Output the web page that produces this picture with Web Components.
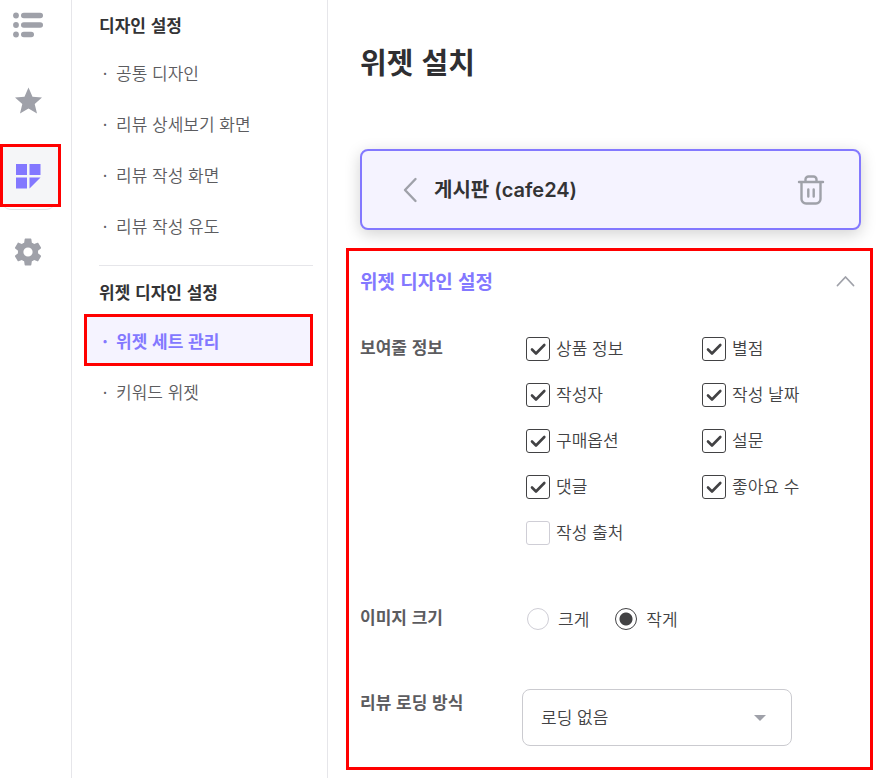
<!DOCTYPE html>
<html lang="ko">
<head>
<meta charset="utf-8">
<title>위젯 설치</title>
<style>
    body {
        margin: 0;
        background: #fff;
        color: #424244;
        font-family: "Noto Sans CJK KR", sans-serif;
        font-size: 17px;
        --accent: #8378ff;
        --tint: #f5f3ff;
        --mark: #ff0000;
        --line: #e6e6ea;
        --gray: #9fa1a9;
    }
</style>
</head>
<body>

<admin-layout>
    <icon-rail slot="rail">
        <rail-item label="목록">
            <svg width="32" height="28" viewBox="0 0 32 28" fill="currentColor">
                <circle cx="4" cy="5.500" r="2.900"/><rect x="9" y="2.700" width="22" height="5.600" rx="2.800"/>
                <circle cx="4" cy="15" r="2.900"/><rect x="9" y="12.200" width="22" height="5.600" rx="2.800"/>
                <circle cx="4" cy="24.500" r="2.900"/><rect x="9" y="21.700" width="13" height="5.600" rx="2.800"/>
            </svg>
        </rail-item>
        <rail-item label="즐겨찾기">
            <svg width="28" height="28" viewBox="0 0 28 28" fill="currentColor">
                <path d="M14.500 1.500l4 9.200 9.500.700-7.300 6.500L23 27.500l-8.500-5.100L6 27.500l2.300-9.600L1 11.400l9.500-.700z"/>
            </svg>
        </rail-item>
        <rail-item label="위젯" active>
            <svg width="28" height="28" viewBox="0 0 28 28" fill="currentColor">
                <path d="M2 2h11v11H2zM15.500 2h11v11h-11zM2 15.500h11v11H2zM15.500 15.500h11l-11 11z"/>
            </svg>
        </rail-item>
        <rail-item label="설정">
            <svg width="28" height="28" viewBox="2 2 20 20" fill="currentColor">
                <path d="M19.140 12.940c.040-.300.060-.610.060-.940 0-.320-.020-.640-.070-.940l2.030-1.580c.180-.140.230-.410.120-.610l-1.920-3.320c-.120-.220-.370-.290-.590-.220l-2.390.960c-.500-.380-1.030-.700-1.620-.940l-.360-2.540c-.040-.240-.240-.410-.480-.410h-3.840c-.240 0-.430.170-.470.410l-.360 2.540c-.590.240-1.130.570-1.620.940l-2.390-.960c-.220-.080-.470 0-.590.220L2.740 8.870c-.120.210-.080.470.120.610l2.030 1.580c-.050.300-.090.630-.090.940s.020.640.070.940l-2.030 1.580c-.180.140-.230.410-.120.610l1.920 3.320c.120.220.370.290.590.220l2.390-.960c.500.380 1.030.700 1.620.940l.360 2.540c.050.240.240.410.480.410h3.840c.240 0 .440-.170.470-.410l.360-2.540c.590-.240 1.130-.560 1.620-.940l2.390.960c.220.080.470 0 .590-.220l1.920-3.320c.120-.220.070-.470-.120-.610zM12 15.300a3.300 3.300 0 1 1 0-6.600 3.300 3.300 0 0 1 0 6.600z"/>
            </svg>
        </rail-item>
    </icon-rail>

    <side-menu slot="menu">
        <menu-group heading="디자인 설정">
            <menu-item>공통 디자인</menu-item>
            <menu-item>리뷰 상세보기 화면</menu-item>
            <menu-item>리뷰 작성 화면</menu-item>
            <menu-item>리뷰 작성 유도</menu-item>
        </menu-group>
        <menu-group heading="위젯 디자인 설정">
            <menu-item active>위젯 세트 관리</menu-item>
            <menu-item>키워드 위젯</menu-item>
        </menu-group>
    </side-menu>

    <page-title>위젯 설치</page-title>
    <widget-card>게시판 (cafe24)</widget-card>
    <settings-panel heading="위젯 디자인 설정">
        <check-field label="보여줄 정보">
            <check-option checked>상품 정보</check-option>
            <check-option checked>별점</check-option>
            <check-option checked>작성자</check-option>
            <check-option checked>작성 날짜</check-option>
            <check-option checked>구매옵션</check-option>
            <check-option checked>설문</check-option>
            <check-option checked>댓글</check-option>
            <check-option checked>좋아요 수</check-option>
            <check-option>작성 출처</check-option>
        </check-field>
        <radio-field label="이미지 크기" options="크게,작게" value="작게"></radio-field>
        <select-field label="리뷰 로딩 방식" options="로딩 없음"></select-field>
    </settings-panel>
</admin-layout>

<script>
// Small base: every element renders its own markup into an open shadow root.
class BaseElement extends HTMLElement {
    constructor() {
        super();
        this.attachShadow({ mode: 'open' });
    }

    connectedCallback() {
        const template = document.createElement('template');
        template.innerHTML = this.render();
        this.shadowRoot.replaceChildren(template.content.cloneNode(true));
    }

    attr(name) {
        return this.getAttribute(name) || '';
    }
}

class AdminLayout extends BaseElement {
    render() {
        return `
            <style>
                :host {
                    display: grid;
                    grid-template-columns: 72px 256px minmax(0, 1fr);
                    min-height: 100vh;
                }
                main { padding: 0 10px 8px 18px; }
            </style>
            <slot name="rail"></slot>
            <slot name="menu"></slot>
            <main><slot></slot></main>
        `;
    }
}

class IconRail extends BaseElement {
    render() {
        return `
            <style>
                :host { display: block; border-right: 1px solid var(--line); }
                nav {
                    display: flex;
                    flex-direction: column;
                    gap: 48px;
                    padding-top: 10px;
                }
            </style>
            <nav><slot></slot></nav>
        `;
    }
}

class RailItem extends BaseElement {
    render() {
        return `
            <style>
                :host { display: block; position: relative; width: 61px; height: 28px; color: var(--gray); }
                a {
                    display: flex;
                    align-items: center;
                    justify-content: center;
                    box-sizing: border-box;
                    height: 28px;
                    padding-right: 5px;
                    color: inherit;
                }
                :host([active]) { color: var(--accent); }
                :host([active]) a {
                    height: 63px;
                    margin-top: -18px;
                    border: 3px solid var(--mark);
                    background: #f5f6f8;
                }
                /* rounded lower edge of the active tile */
                :host([active])::after {
                    content: "";
                    position: absolute;
                    left: 0;
                    right: 4px;
                    bottom: -20px;
                    height: 12px;
                    border-bottom: 1px solid #e3e5e8;
                    border-radius: 0 0 12px 12px;
                    z-index: -1;
                }
            </style>
            <a href="#" aria-label="${this.attr('label')}"><slot></slot></a>
        `;
    }
}

class SideMenu extends BaseElement {
    render() {
        return `
            <style>
                :host { display: block; border-right: 1px solid var(--line); }
                nav { padding: 0 14px 0 12px; }
            </style>
            <nav><slot></slot></nav>
        `;
    }
}

class MenuGroup extends BaseElement {
    render() {
        return `
            <style>
                :host { display: block; }
                :host(:not(:first-child)) h2 {
                    margin-top: 14px;
                    padding-top: 14px;
                    border-top: 1px solid var(--line);
                }
                h2 {
                    margin: 0 0 0 15px;
                    font-size: 17px;
                    line-height: 24px;
                    padding: 13px 0 10px;
                    color: #333335;
                }
            </style>
            <h2>${this.attr('heading')}</h2>
            <slot></slot>
        `;
    }
}

class MenuItem extends BaseElement {
    render() {
        return `
            <style>
                :host { display: block; color: #5c5c5f; font-weight: 350; }
                a {
                    display: flex;
                    align-items: center;
                    box-sizing: border-box;
                    height: 51px;
                    padding-left: 15px;
                    border: 0 solid var(--mark);
                    color: inherit;
                    text-decoration: none;
                }
                .dot { width: 12px; margin-right: 5px; text-align: center; }
                :host([active]) { color: var(--accent); font-weight: bold; }
                :host([active]) a {
                    height: 52px;
                    border-width: 3px;
                    padding-left: 12px;
                    background: var(--tint);
                }
            </style>
            <a href="#"><span class="dot">·</span><slot></slot></a>
        `;
    }
}

class PageTitle extends BaseElement {
    render() {
        return `
            <style>
                :host { display: block; margin-left: 14px; }
                h1 {
                    margin: 0;
                    padding: 39px 0 66px;
                    font-size: 29px;
                    line-height: 44px;
                    color: #2f2f32;
                }
            </style>
            <h1><slot></slot></h1>
        `;
    }
}

class WidgetCard extends BaseElement {
    render() {
        return `
            <style>
                :host {
                    display: flex;
                    align-items: center;
                    box-sizing: border-box;
                    height: 81px;
                    margin: 0 12px 18px 14px;
                    padding: 0 34px 0 39px;
                    border: 2px solid var(--accent);
                    border-radius: 8px;
                    background: var(--tint);
                    box-shadow: 0 4px 16px rgba(0, 0, 0, .18);
                }
                button {
                    display: flex;
                    padding: 0;
                    border: 0;
                    background: none;
                    color: var(--gray);
                }
                h2 {
                    flex: 1;
                    margin: 0 0 0 16px;
                    font: bold 20px/28px Inter, "Noto Sans CJK KR", sans-serif;
                    font-weight: 600;
                    color: #333335;
                }
            </style>
            <button aria-label="뒤로">
                <svg width="17" height="26" viewBox="0 0 17 26" fill="none" stroke="currentColor" stroke-width="2.400" stroke-linecap="round" stroke-linejoin="round">
                    <path d="M14.500 2L4 13l10.500 11"/>
                </svg>
            </button>
            <h2><slot></slot></h2>
            <button aria-label="삭제">
                <svg width="28" height="32" viewBox="0 0 28 32" fill="none" stroke="currentColor" stroke-width="2.400" stroke-linecap="round" stroke-linejoin="round">
                    <path d="M2 8h24M8.500 8V5.500a3 3 0 0 1 3-3h5a3 3 0 0 1 3 3V8M4.500 8v17a4.500 4.500 0 0 0 4.500 4.500h10a4.500 4.500 0 0 0 4.500-4.500V8M11.300 15.500v7M16.700 15.500v7"/>
                </svg>
            </button>
        `;
    }
}

class SettingsPanel extends BaseElement {
    render() {
        return `
            <style>
                :host {
                    display: block;
                    padding: 0 11px 21px;
                    border: 3px solid var(--mark);
                }
                header {
                    display: flex;
                    align-items: center;
                    justify-content: space-between;
                    height: 60px;
                    padding-right: 4px;
                    margin-bottom: 26px;
                }
                h2 { margin: 0; font-size: 19px; line-height: 28px; color: var(--accent); }
                button { display: flex; padding: 0; border: 0; background: none; color: var(--gray); }
                .fields { display: flex; flex-direction: column; gap: 58px; }
            </style>
            <header>
                <h2>${this.attr('heading')}</h2>
                <button aria-label="접기" aria-expanded="true">
                    <svg width="20" height="14" viewBox="0 0 20 14" fill="none" stroke="currentColor" stroke-width="1.800" stroke-linecap="round" stroke-linejoin="round">
                        <path d="M2.500 11.500L10.500 3l8 8.500"/>
                    </svg>
                </button>
            </header>
            <div class="fields"><slot></slot></div>
        `;
    }
}

// Label on the left, control on the right
class FieldRow extends BaseElement {
    render() {
        return `
            <style>
                :host {
                    display: grid;
                    grid-template-columns: 162px minmax(0, 1fr);
                    align-items: start;
                }
                ::slotted([slot="label"]) {
                    font-weight: bold;
                    line-height: 20px;
                    color: #5c5c5f;
                }
            </style>
            <slot name="label"></slot>
            <slot></slot>
        `;
    }
}

class CheckField extends BaseElement {
    render() {
        return `
            <style>
                :host { display: block; }
                .options {
                    display: grid;
                    grid-template-columns: repeat(2, 176px);
                    gap: 22px 0;
                    padding-left: 4px;
                }
            </style>
            <field-row role="group" aria-labelledby="name">
                <span slot="label" id="name">${this.attr('label')}</span>
                <div class="options"><slot></slot></div>
            </field-row>
        `;
    }
}

class CheckOption extends BaseElement {
    render() {
        return `
            <style>
                :host { display: block; font-weight: 350; }
                label { display: flex; align-items: flex-start; gap: 6px; line-height: 22px; }
                .box { display: grid; }
                .box > * { grid-area: 1 / 1; }
                input {
                    appearance: none;
                    box-sizing: border-box;
                    width: 24px;
                    height: 24px;
                    margin: 0;
                    border: 1px solid #cfced6;
                    border-radius: 3px;
                    background: #fff;
                }
                input:checked { border-color: #424244; }
                svg { pointer-events: none; visibility: hidden; }
                input:checked + svg { visibility: visible; }
            </style>
            <label>
                <span class="box">
                    <input type="checkbox" ${this.hasAttribute('checked') ? 'checked' : ''}>
                    <svg width="24" height="24" viewBox="0 0 24 24" fill="none" stroke="#424244" stroke-width="2.600" stroke-linecap="round" stroke-linejoin="round">
                        <path d="M6 12.500l4 4L18.300 8"/>
                    </svg>
                </span>
                <span><slot></slot></span>
            </label>
        `;
    }
}

class RadioField extends BaseElement {
    render() {
        const options = this.attr('options').split(',').map(name => `
            <label>
                <input type="radio" name="size" value="${name}" ${name === this.attr('value') ? 'checked' : ''}>
                <span>${name}</span>
            </label>
        `).join('');
        return `
            <style>
                :host { display: block; padding-top: 4px; }
                .options { display: flex; gap: 26px; padding-left: 5px; font-weight: 350; }
                label { display: flex; align-items: center; gap: 9px; line-height: 24px; }
                input {
                    appearance: none;
                    box-sizing: border-box;
                    width: 22px;
                    height: 22px;
                    margin: 0;
                    border: 1px solid #cfced6;
                    border-radius: 50%;
                    background: #fff;
                }
                input:checked {
                    border-color: #424244;
                    background: radial-gradient(circle, #424244 6px, #fff 7px);
                }
            </style>
            <field-row role="radiogroup" aria-labelledby="name">
                <span slot="label" id="name">${this.attr('label')}</span>
                <div class="options">${options}</div>
            </field-row>
        `;
    }
}

class SelectField extends BaseElement {
    render() {
        const options = this.attr('options').split(',').map(name => `<option>${name}</option>`).join('');
        return `
            <style>
                :host { display: block; }
                label { padding-top: 3px; }
                .select { display: grid; align-items: center; max-width: 270px; }
                .select > * { grid-area: 1 / 1; }
                select {
                    appearance: none;
                    width: 100%;
                    height: 57px;
                    margin: 0;
                    padding: 0 44px 2px 18px;
                    border: 1px solid #cbcbd0;
                    border-radius: 8px;
                    background: #fff;
                    color: inherit;
                    font: inherit;
                    font-weight: 350;
                }
                svg { justify-self: end; margin-right: 26px; pointer-events: none; }
            </style>
            <field-row>
                <label slot="label" for="choice">${this.attr('label')}</label>
                <div class="select">
                    <select id="choice">${options}</select>
                    <svg width="12" height="6" viewBox="0 0 12 6" fill="#9fa1a9"><path d="M0 0h12L6 6z"/></svg>
                </div>
            </field-row>
        `;
    }
}

customElements.define('admin-layout', AdminLayout);
customElements.define('icon-rail', IconRail);
customElements.define('rail-item', RailItem);
customElements.define('side-menu', SideMenu);
customElements.define('menu-group', MenuGroup);
customElements.define('menu-item', MenuItem);
customElements.define('page-title', PageTitle);
customElements.define('widget-card', WidgetCard);
customElements.define('settings-panel', SettingsPanel);
customElements.define('field-row', FieldRow);
customElements.define('check-field', CheckField);
customElements.define('check-option', CheckOption);
customElements.define('radio-field', RadioField);
customElements.define('select-field', SelectField);
</script>
</body>
</html>
